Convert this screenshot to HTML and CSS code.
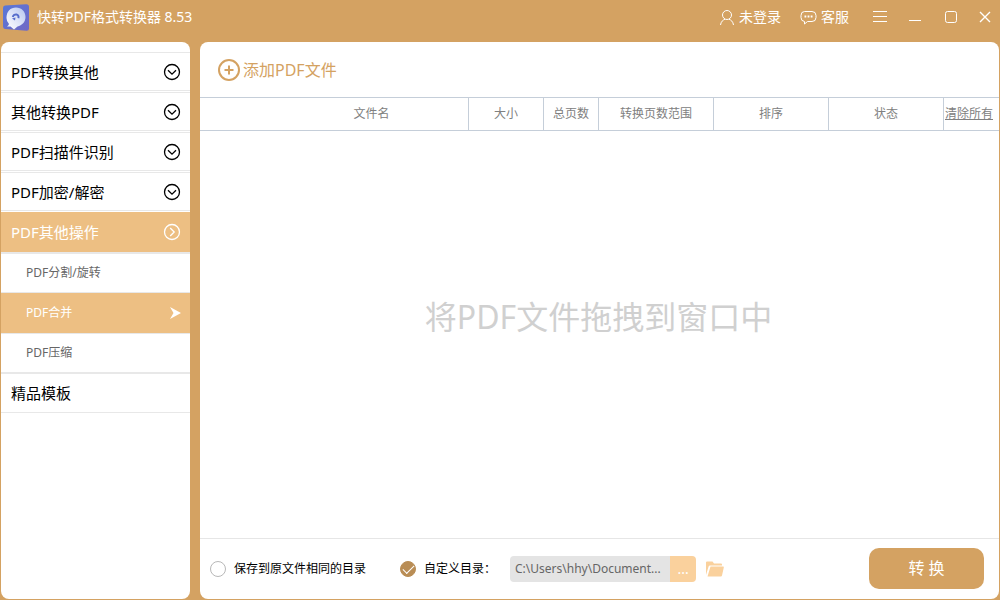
FILE: index.html
```html
<!DOCTYPE html>
<html lang="zh-CN">
<head>
<meta charset="utf-8">
<meta name="viewport" content="width=device-width, initial-scale=1">
<title>快转PDF格式转换器 8.53</title>
<link rel="stylesheet" href="styles.css">
</head>
<body>
<div class="app">
  <header class="titlebar">
    <svg class="logo" width="28" height="28" viewBox="0 0 28 28" aria-hidden="true">
      <defs>
        <linearGradient id="tile" x1="0" y1="0" x2="1" y2="1">
          <stop offset="0" stop-color="#5877d8"/><stop offset="1" stop-color="#7069c4"/>
        </linearGradient>
        <linearGradient id="disc" x1="0" y1="1" x2="1" y2="0">
          <stop offset="0" stop-color="#ffffff"/><stop offset="0.500" stop-color="#dde4f8"/><stop offset="1" stop-color="#b3c4ee"/>
        </linearGradient>
      </defs>
      <path d="M4 2.500 25 1.200Q28 1 28 4V25.500Q28 28 25.500 27.800L4 26Q2 25.800 2 23.500V5Q2 2.700 4 2.500Z" fill="url(#tile)"/>
      <path d="M5.500 15C5.500 8.500 9.500 4.500 15 4.500C20.500 4.500 24.500 8.500 24.500 14C24.500 19 21 22.500 16.500 23.500L13 26.500L9.500 23.500H6Q7.500 22.500 8 21Q5.500 18.500 5.500 15Z" fill="url(#disc)"/>
      <path d="M11.800 14C12.200 12 14 11.200 15.500 11.500C17.300 12 18 13.500 17.300 15.200" fill="none" stroke="#566dcc" stroke-width="2"/>
      <path d="M11 15.500 14.500 14.500 14 17.500Z" fill="#566dcc"/>
    </svg>
    <h1 class="title">快转PDF格式转换器 8.53</h1>
    <button class="bar-button login" type="button">
      <svg width="16" height="17" viewBox="0 0 16 17" aria-hidden="true"><circle cx="8" cy="6" r="4.500"/><path d="M1.500 16C2 12.500 4 11 6 10.200M14.500 16C14 12.500 12 11 10 10.200"/></svg>
      未登录
    </button>
    <button class="bar-button service" type="button">
      <svg width="17" height="17" viewBox="0 0 17 17" aria-hidden="true"><path d="M4.500 2.500H12Q16 2.500 16 6.500V8.500Q16 12.500 12 12.500H7.500L4.500 15V12.500Q1 12.200 1 8.500V6.500Q1 2.500 4.500 2.500Z"/><path d="M4.500 7.500h1.800M7.600 7.500h1.800M10.700 7.500h1.800" stroke-width="1.800"/></svg>
      客服
    </button>
    <div class="window-buttons">
      <button class="icon-button" type="button" aria-label="菜单"><svg width="16" height="16" viewBox="0 0 16 16"><path d="M1 2.500h14M1 7.500h14M1 12.500h14"/></svg></button>
      <button class="icon-button" type="button" aria-label="最小化"><svg width="16" height="16" viewBox="0 0 16 16"><path d="M2 11.500h12"/></svg></button>
      <button class="icon-button" type="button" aria-label="最大化"><svg width="16" height="16" viewBox="0 0 16 16"><rect x="3.500" y="2.500" width="11" height="11" rx="2"/></svg></button>
      <button class="icon-button" type="button" aria-label="关闭"><svg width="16" height="16" viewBox="0 0 16 16"><path d="M3 3 13 13M13 3 3 13" stroke-width="1.400"/></svg></button>
    </div>
  </header>

  <div class="body">
    <nav class="sidebar">
      <button class="group" type="button">PDF转换其他<svg width="18" height="18" viewBox="0 0 18 18" aria-hidden="true"><circle cx="9" cy="9" r="7.500"/><path d="M5 7.200 9 11.200 13 7.200"/></svg></button>
      <button class="group" type="button">其他转换PDF<svg width="18" height="18" viewBox="0 0 18 18" aria-hidden="true"><circle cx="9" cy="9" r="7.500"/><path d="M5 7.200 9 11.200 13 7.200"/></svg></button>
      <button class="group" type="button">PDF扫描件识别<svg width="18" height="18" viewBox="0 0 18 18" aria-hidden="true"><circle cx="9" cy="9" r="7.500"/><path d="M5 7.200 9 11.200 13 7.200"/></svg></button>
      <button class="group" type="button">PDF加密/解密<svg width="18" height="18" viewBox="0 0 18 18" aria-hidden="true"><circle cx="9" cy="9" r="7.500"/><path d="M5 7.200 9 11.200 13 7.200"/></svg></button>
      <button class="group open" type="button" aria-expanded="true">PDF其他操作<svg width="18" height="18" viewBox="0 0 18 18" aria-hidden="true"><circle cx="9" cy="9" r="7.500"/><path d="M7.200 5 11.200 9 7.200 13"/></svg></button>
      <div class="submenu">
        <button class="sub" type="button">PDF分割/旋转</button>
        <button class="sub current" type="button">PDF合并<svg width="12" height="12" viewBox="0 0 12 12" aria-hidden="true"><path d="M0 0 11 6 0 12 3.500 6Z"/></svg></button>
        <button class="sub" type="button">PDF压缩</button>
      </div>
      <button class="group last" type="button">精品模板</button>
    </nav>

    <main class="panel">
      <div class="toolbar">
        <button class="add" type="button">
          <svg width="22" height="22" viewBox="0 0 22 22" aria-hidden="true"><circle cx="11" cy="11" r="10"/><path d="M6.500 11h9M11 6.500v9"/></svg>
          添加PDF文件
        </button>
      </div>
      <table class="files">
        <colgroup>
          <col><col class="col-size"><col class="col-pages"><col class="col-wide"><col class="col-wide"><col class="col-wide"><col class="col-pages">
        </colgroup>
        <thead>
          <tr>
            <th class="name">文件名</th><th>大小</th><th>总页数</th><th>转换页数范围</th><th>排序</th><th>状态</th>
            <th class="clear"><a href="#">清除所有</a></th>
          </tr>
        </thead>
      </table>
      <div class="dropzone">将PDF文件拖拽到窗口中</div>
      <footer class="output">
        <label class="choice same"><input type="radio" name="dir">保存到原文件相同的目录</label>
        <label class="choice custom"><input type="radio" name="dir" checked>自定义目录：</label>
        <div class="path">
          <input class="path-text" type="text" aria-label="自定义目录" value="C:\Users\hhy\Document..." readonly>
          <button class="browse" type="button" aria-label="浏览">...</button>
        </div>
        <button class="folder" type="button" aria-label="打开目录">
          <svg width="18" height="16" viewBox="0 0 18 16" aria-hidden="true"><path d="M0 14V1.500Q0 0.500 1 0.500H6.500L8 2.500H15Q16 2.500 16 3.500V4.500H4Q3 4.500 2.600 5.500Z"/><path d="M4.500 5.500H17.200Q18 5.500 17.800 6.500L16 14.500Q15.800 15.500 14.800 15.500H1.500Z"/></svg>
        </button>
        <button class="convert" type="button">转 换</button>
      </footer>
    </main>
  </div>
</div>
</body>
</html>
```

FILE: styles.css
```css
* {
  box-sizing: border-box;
}

body {
  margin: 0;
  font-family: "Noto Sans", "Noto Sans CJK SC", sans-serif;
  font-size: 12px;
  line-height: 20px;
  color: #000;
}

button,
input {
  margin: 0;
  padding: 0;
  border: 0;
  background: none;
  font: inherit;
  color: inherit;
}

button {
  cursor: pointer;
}

svg {
  display: block;
  flex: none;
  fill: none;
  stroke: currentColor;
}

.app {
  display: flex;
  flex-direction: column;
  min-height: 100vh;
  padding: 0 1px 1px;
  background: #d4a262;
}

/* Title bar */
.titlebar {
  display: flex;
  align-items: center;
  height: 42px;
  padding: 0 6px 8px 0;
  font-size: 14px;
  color: #fff;
}

.logo {
  stroke: none;
}

.title {
  flex: 1;
  margin: 0 0 0 8px;
  font-size: 14px;
  font-weight: 400;
}

.bar-button {
  display: flex;
  align-items: center;
  gap: 4px;
  margin-right: 19px;
}

.service {
  margin-right: 23px;
}

.window-buttons {
  display: flex;
  gap: 19px;
}

.icon-button {
  width: 16px;
}

/* Sidebar */
.body {
  display: flex;
  flex: 1;
  gap: 10px;
}

.sidebar {
  display: flex;
  flex: none;
  flex-direction: column;
  width: 189px;
  padding-top: 10px;
  border-radius: 8px;
  background: #fff;
}

.group {
  display: flex;
  align-items: center;
  justify-content: space-between;
  height: 39px;
  margin-bottom: 1px;
  padding: 0 9px 0 10px;
  border-top: 1px solid #e8e8e8;
  border-bottom: 1px solid #e8e8e8;
  font-size: 15px;
  text-align: left;
}

.group svg {
  stroke-width: 1.300;
}

.open {
  height: 40px;
  margin: 0;
  border-color: #edbf83;
  background: #edbf83;
  color: #fff;
}

.submenu {
  display: flex;
  flex-direction: column;
  border-top: 2px solid #e8e8e8;
}

.sub {
  display: flex;
  align-items: center;
  justify-content: space-between;
  height: 39px;
  padding: 0 8px 0 25px;
  border-bottom: 1px solid #e8e8e8;
  color: #666;
}

.current {
  height: 41px;
  background: #edbf83;
  color: #fff;
}

.current svg {
  fill: currentColor;
  stroke: none;
}

.last {
  height: 40px;
  margin: 0;
}

/* Main panel */
.panel {
  display: flex;
  flex: 1;
  flex-direction: column;
  min-width: 0;
  border-radius: 8px;
  background: #fff;
}

.toolbar {
  display: flex;
  height: 55px;
  padding-left: 18px;
}

.add {
  display: flex;
  align-items: center;
  gap: 3px;
  font-size: 16px;
  color: #d4a262;
}

.add svg {
  stroke-width: 2;
}

.files {
  width: 100%;
  border-spacing: 0;
  border-top: 1px solid #c5ced9;
  border-bottom: 1px solid #c5ced9;
  table-layout: fixed;
  color: #808080;
}

.files th {
  height: 32px;
  padding: 0;
  border-right: 1px solid #c5ced9;
  font-weight: 400;
}

.files .name {
  padding-left: 75px;
}

.files .clear {
  border-right: 0;
  text-align: left;
  padding-left: 1px;
  white-space: nowrap;
}

.files a {
  color: inherit;
}

.col-size {
  width: 75px;
}

.col-pages {
  width: 55px;
}

.col-wide {
  width: 115px;
}

.dropzone {
  display: flex;
  flex: 1;
  align-items: center;
  justify-content: center;
  padding: 0 2px 36px 0;
  font-size: 32px;
  line-height: 48px;
  color: #d0d0d0;
}

/* Output bar */
.output {
  display: flex;
  align-items: center;
  height: 61px;
  padding: 0 15px 0 10px;
  border-top: 1px solid #e6e6e6;
}

.choice {
  display: flex;
  align-items: center;
  gap: 8px;
}

.choice input {
  width: 16px;
  height: 16px;
  border: 1px solid #b8b8b8;
  border-radius: 50%;
  appearance: none;
}

.choice input:checked {
  display: grid;
  place-items: center;
  border-color: #b98d55;
  background: #b98d55;
}

.choice input:checked::after {
  content: "";
  width: 10px;
  height: 5px;
  margin-bottom: 3px;
  border-bottom: 1px solid #fff;
  border-left: 1px solid #fff;
  transform: rotate(-45deg);
}

.custom {
  margin-left: 34px;
}

.path {
  display: flex;
  width: 186px;
  height: 26px;
  margin-left: 14px;
  border-radius: 4px;
  overflow: hidden;
}

.path-text {
  flex: 1;
  min-width: 0;
  padding-left: 5px;
  background: #e4e4e4;
  color: #666;
}

.browse {
  width: 26px;
  background: #fad19d;
  color: #fff;
  font-size: 14px;
}

.folder {
  margin-left: 10px;
  color: #fad19d;
}

.folder svg {
  fill: currentColor;
  stroke: none;
}

.convert {
  width: 115px;
  height: 41px;
  margin: 0 0 2px auto;
  border-radius: 10px;
  background: #d4a262;
  font-size: 16px;
  color: #fff;
}
```
